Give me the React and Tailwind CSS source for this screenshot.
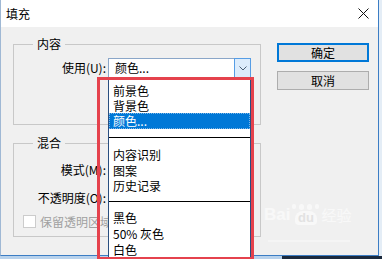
import React from 'react';

// Photoshop "填充" dialog with the 使用 dropdown opened
const menuGroups = [
  [
    { label: '前景色', h: 'h-[15px]' },
    { label: '背景色', h: 'h-[15px]' },
    { label: '颜色...', h: 'h-[16px]', active: true },
  ],
  [
    { label: '内容识别', h: 'h-[16px]' },
    { label: '图案', h: 'h-[15px]' },
    { label: '历史记录', h: 'h-[16px]' },
  ],
  [
    { label: '黑色', h: 'h-[16px]' },
    { label: '50% 灰色', h: 'h-[16px]' },
    { label: '白色', h: 'h-[16px]' },
  ],
];

const GroupBox = ({ title, className, children }) => (
  <div className={`relative border border-[#c8c8c8] ${className}`}>
    <span className="absolute left-[19px] -top-[9px] px-[4px] bg-[#f0f0f0] leading-[16px]">{title}</span>
    {children}
  </div>
);

const App = () => {
  return (
    <div className="relative w-[382px] h-[259px] overflow-hidden bg-[#d4e3f2] text-[12px] text-black font-['Noto_Sans_CJK_SC','Noto_Sans',sans-serif]">
      <div className="flex">
        <div className="w-[379px] h-[256px] flex flex-col border-l border-l-[#9fb8d4] border-r border-r-[#3c7dc4] border-b border-b-[#3c7dc4]">
          {/* title bar */}
          <div className="h-[27px] bg-white flex items-center justify-between pl-[5px] pr-[9px]">
            <span className="leading-[16px]">填充</span>
            <svg width="11" height="11" viewBox="0 0 11 11">
              <path d="M0.5 0.5 L10.5 10.5 M10.5 0.5 L0.5 10.5" stroke="#111" strokeWidth="1" />
            </svg>
          </div>

          {/* body */}
          <div className="flex-1 bg-[#f0f0f0] flex pl-[12px]">
            <div className="w-[248px] flex flex-col gap-[18px] pt-[17px]">
              <GroupBox title="内容" className="h-[81px]">
                <div className="flex items-center h-[20px] mt-[13px]">
                  <span className="w-[92px] text-right leading-[16px]">使用(U):</span>
                  <div className="ml-[2px] w-[143px] h-[20px] bg-white border border-[#8aa6c8] flex items-center">
                    <span className="flex-1 pl-[6px] leading-[16px]">颜色...</span>
                    <div className="w-[17px] h-[20px] -mr-px -my-px bg-[#dcecfc] border border-[#569de5] flex items-center justify-center">
                      <svg width="8" height="5" viewBox="0 0 8 5">
                        <path d="M0.5 0.5 L4 4 L7.5 0.5" fill="none" stroke="#4a5e74" strokeWidth="1" />
                      </svg>
                    </div>
                  </div>
                </div>
              </GroupBox>

              <GroupBox title="混合" className="h-[94px]">
                <div className="flex items-center h-[20px] mt-[16px]">
                  <span className="w-[92px] text-right leading-[16px]">模式(M):</span>
                </div>
                <div className="flex items-center h-[20px] mt-[8px]">
                  <span className="w-[92px] text-right leading-[16px]">不透明度(O):</span>
                </div>
                <div className="flex items-center h-[13px] mt-[7px] ml-[9px] gap-[4px]">
                  <span className="w-[13px] h-[13px] border border-[#cccccc] bg-white" />
                  <span className="text-[#a0a0a0] leading-[16px] whitespace-nowrap">保留透明区域</span>
                </div>
              </GroupBox>
            </div>

            <div className="ml-[16px] mt-[16px] w-[92px] flex flex-col gap-[9px]">
              <button className="h-[19px] border-2 border-[#0078d7] bg-[#e1e1e1] flex items-center justify-center leading-[14px]">确定</button>
              <button className="h-[19px] border border-[#adadad] bg-[#e1e1e1] flex items-center justify-center leading-[14px]">取消</button>
            </div>
          </div>
        </div>
        <div className="flex-1 bg-[#e4edf6]" />
      </div>
      <div className="flex h-[3px]">
        <div className="w-[282px] bg-[#b8d2ec]" />
        <div className="flex-1 bg-[#1b2a3d]" />
      </div>

      {/* watermark */}
      <div className="absolute left-[264px] top-[204px] flex items-end gap-[2px] text-white/55 pointer-events-none">
        <span className="text-[17px] font-bold leading-[20px] font-['Liberation_Sans',sans-serif]">Bai</span>
        <div className="relative flex flex-col items-center">
          <div className="flex gap-[3px] mb-[1px]">
            <span className="w-[4px] h-[5px] rounded-full bg-white/55" />
            <span className="w-[5px] h-[6px] rounded-full bg-white/55" />
            <span className="w-[5px] h-[6px] rounded-full bg-white/55" />
            <span className="w-[4px] h-[5px] rounded-full bg-white/55" />
          </div>
          <span className="px-[3px] rounded-t-[8px] rounded-b-[4px] bg-white/55 text-[#e2e2e2] text-[13px] font-bold leading-[14px] font-['Liberation_Sans',sans-serif]">du</span>
        </div>
        <span className="text-[15px] leading-[20px]">经验</span>
      </div>
      <div className="absolute left-[268px] top-[240px] w-[82px] h-[2px] bg-white/35" />

      {/* open dropdown list */}
      <div className="absolute left-[108px] top-[78px] w-[143px] h-[180px] bg-white border border-[#2a4f80] pt-[4px]">
        {menuGroups.map((group, gi) => (
          <div key={gi}>
            {gi > 0 && (
              <div className={gi === 1 ? 'h-[18px] pt-[8px]' : 'h-[16px] pt-[7px]'}>
                <div className="h-px bg-black" />
              </div>
            )}
            {group.map((item) => (
              <div
                key={item.label}
                className={`${item.h} flex items-center pl-[4px] leading-[14px] ${
                  item.active ? 'bg-[#0078d7] text-white outline-1 outline-dotted outline-[#7fb6e6] -outline-offset-1' : ''
                }`}
              >
                {item.label}
              </div>
            ))}
          </div>
        ))}
      </div>

      {/* red annotation box */}
      <div className="absolute left-[97px] top-[77px] w-[157px] h-[183px] border-[3px] border-[#e5424d] pointer-events-none" />
    </div>
  );
};

export default App;
